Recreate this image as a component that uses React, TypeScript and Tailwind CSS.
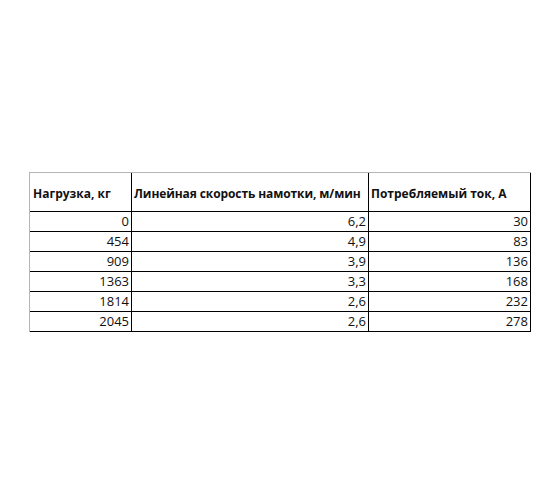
import { Fragment } from "react"

const rows = [
  { load: "0", speed: "6,2", current: "30" },
  { load: "454", speed: "4,9", current: "83" },
  { load: "909", speed: "3,9", current: "136" },
  { load: "1363", speed: "3,3", current: "168" },
  { load: "1814", speed: "2,6", current: "232" },
  { load: "2045", speed: "2,6", current: "278" },
]

export default function App() {
  return (
    <div className="flex h-[504px] w-[560px] items-center justify-center bg-white font-['Open_Sans',sans-serif] text-[#111]">
      <div className="grid grid-cols-[102px_237px_162px] border-l border-t border-[#b5b5b5]">
        <div className="flex h-[39px] items-center border-b border-r border-black pl-[3px] pt-[3px] text-[12px] font-bold">Нагрузка, кг</div>
        <div className="flex h-[39px] items-center border-b border-r border-black pl-[2px] pt-[3px] text-[12px] font-bold tracking-[-0.1px]">Линейная скорость намотки, м/мин</div>
        <div className="flex h-[39px] items-center border-b border-r border-black pl-[2px] pt-[3px] text-[12px] font-bold">Потребляемый ток, А</div>
        {rows.map((r) => (
          <Fragment key={r.load}>
            <div className="flex h-[20px] items-center justify-end border-b border-r border-black pr-[2px] text-[13px]">{r.load}</div>
            <div className="flex h-[20px] items-center justify-end border-b border-r border-black pr-[2px] text-[13px]">{r.speed}</div>
            <div className="flex h-[20px] items-center justify-end border-b border-r border-black pr-[2px] text-[13px]">{r.current}</div>
          </Fragment>
        ))}
      </div>
    </div>
  )
}
